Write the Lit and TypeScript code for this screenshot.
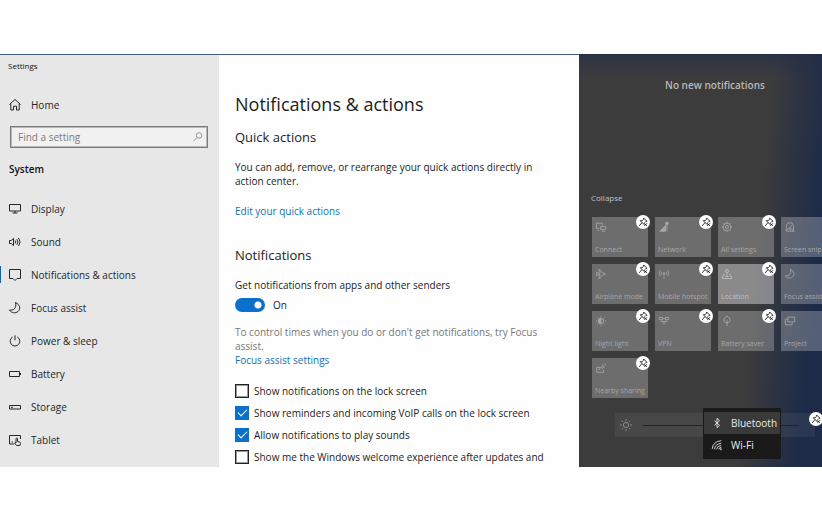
import { LitElement, html, css, svg } from "lit";
import { customElement } from "lit/decorators.js";
import { classMap } from "lit/directives/class-map.js";

const icons: Record<string, unknown> = {
  home: svg`<path d="M1.5 6.5 7 1.5l5.500 5M2.800 5.800v6.200h2.700V8.200h3V12h2.700V5.800"/>`,
  search: svg`<circle cx="8.200" cy="5.200" r="3.200"/><path d="M5.800 7.600 1.800 11.800"/>`,
  display: svg`<path d="M1.500 2.500h11v6.500h-11zM7 9v2M4.500 11h5"/>`,
  sound: svg`<path d="M1.500 5.500h1.700L5.500 3.400v7.200L3.200 8.500H1.500zM7.200 5.500q1.200 1.500 0 3M8.900 4.200q2 2.800 0 5.600M10.600 3q3 4 0 8"/>`,
  note: svg`<path d="M1.500 1.500h11v9H9L7 12.500l-2-2H1.500z"/>`,
  moon: svg`<path d="M7.500 1.500c4.500 2 5.500 6.500 2.500 9-2.500 2-6.500 1.700-8.500-1.500 3.500.8 7.500-1.500 6-7.500z"/>`,
  power: svg`<path d="M4.700 3a4.800 4.800 0 1 0 4.600 0M7 1.300v5"/>`,
  battery: svg`<path d="M1.500 4.500h10v5h-10zM12.500 6v2"/>`,
  storage: svg`<path d="M1.500 5.500h11v3.500h-11zM3 7.300h2"/>`,
  tablet: svg`<path d="M6 11H1.500V2.500h11V6M8 10V5.500q.8-1 1.500 0v3l2.500.7q.8.400.5 1.300l-.6 2H8.500L6.600 10q.5-.8 1.400 0M3.500 9h1.500"/>`,
  connect: svg`<path d="M5 8.500H1.500v-6h7V5M6.500 6.500h6v3.500h-6zM8 12h4M3 11h2"/>`,
  network: svg`<path d="M2 12 9 5v7z" fill="currentColor"/><circle cx="10.500" cy="3" r="1.700" fill="currentColor"/><path d="M10.500 5v7"/>`,
  gear: svg`<circle cx="7" cy="7" r="4.500"/><circle cx="7" cy="7" r="1.800"/><path d="M7 1v1.500M7 11.500V13M1 7h1.500M11.500 7H13M2.800 2.800l1 1M10.200 10.200l1 1M2.800 11.200l1-1M10.200 3.800l1-1"/>`,
  snip: svg`<path d="M3 8V5q0-3 4-3t4 3v6.500M1.500 9.500h3.500l4.500-5M7 8l5 4H7zM3 9.500v2.500h3"/>`,
  plane: svg`<path d="M2 4.500 3.500 6.200 6 6 4.500 1.800h1.300L9 6h2.500q1.500.900 0 2H9l-3.200 4.200H4.500L6 8l-2.500-.2L2 9.500z"/>`,
  hotspot: svg`<path d="M7 6v7M4.700 4.500q-1.200 1.800 0 3.600M9.300 4.500q1.200 1.800 0 3.600M2.700 2.800q-2.200 3.500 0 7M11.300 2.800q2.200 3.500 0 7"/><circle cx="7" cy="6" r=".8"/>`,
  location: svg`<circle cx="7" cy="3.500" r="1.800"/><path d="M7 5.300V10M4.500 7.500H3L1.500 12.300h11L11 7.500H9.500M5 10h4"/>`,
  sun: svg`<circle cx="7" cy="7" r="2.600"/><path d="M7 1v1.800M7 11.200V13M1 7h1.800M11.200 7H13M2.800 2.800l1.200 1.200M10 10l1.200 1.200M2.800 11.200 4 10M10 4l1.200-1.200"/>`,
  night: svg`<circle cx="7" cy="7" r="3"/><path d="M7 4a3 3 0 0 0 0 6z" fill="currentColor"/><path d="M7 1v1.800M7 11.200V13M1 7h1.800M11.200 7H13M2.800 2.800l1.200 1.200M10 10l1.200 1.200M2.800 11.200 4 10M10 4l1.200-1.200"/>`,
  vpn: svg`<path d="M1.500 3h4v2.500h-4zM5.500 4.300h3M8.500 3h4v2.500h-4zM3 7.500h8M5 7.500l2 3 2-3"/>`,
  saver: svg`<path d="M7 6v7M7 9Q2.500 8.500 3.800 4.500 5 2 7 1.500q2 .5 3.200 3Q11.500 8.500 7 9z"/>`,
  project: svg`<path d="M4.500 2.500h8v5.500h-8zM4 5H1.500v6.500h8V9"/>`,
  share: svg`<path d="M6 6.500H2v5.500h8V9M5 9.500q.5-4 4-4M8 3l3 2.500L8 8M11 1.500q1.500 1 1.500 2.500"/>`,
  pin: svg`<path d="M8 1.500 12.500 6 11 6.300 9.300 8M8 1.500l-.3 1.800-2 1.900H3.200l5.300 5.300V9.300M5.500 8 1.500 12.500M8.800 8.800l3.700 3.700M12.500 8.800l-3.700 3.700"/>`,
  bluetooth: svg`<path d="m4 4.300 6 5.400L7 12.500v-11l3 2.800-6 5.400"/>`,
  wifi: svg`<path d="M1.500 11.500Q2 3 12 2M4 12q.5-6 8-7M6.500 12q.5-4 5.500-4.500M9 12q.3-2 3-2.200"/><circle cx="11.500" cy="12" r=".7"/>`,
};

const icon = (name: string) =>
  html`<svg class="icon" viewBox="0 0 14 14" aria-hidden="true">${icons[name]}</svg>`;

const iconStyles = css`
  .icon {
    display: block;
    flex: none;
    width: 14px;
    height: 14px;
    fill: none;
    stroke: currentColor;
    stroke-width: 1;
  }
`;

@customElement("settings-sidebar")
class SettingsSidebar extends LitElement {
  static styles = [
    iconStyles,
    css`
      :host {
        display: block;
        background: #e7e7e7;
        color: #262626;
        padding-bottom: 11px;
      }
      .title {
        font-size: 8px;
        line-height: 22px;
        padding-left: 8px;
        margin-bottom: 12px;
        color: #111;
      }
      .link {
        display: flex;
        align-items: center;
        gap: 9px;
        height: 33px;
        padding-left: 8px;
        color: inherit;
        text-decoration: none;
      }
      .link.home { height: 32px; }
      .link.current {
        background: linear-gradient(#0f66b5, #0f66b5) left center / 1px 17px no-repeat;
      }
      .search {
        display: flex;
        align-items: center;
        box-sizing: border-box;
        height: 22px;
        margin: 5px 11px 12px 10px;
        padding: 0 3px 0 7px;
        border: 1px solid #7b7b7b;
        outline: 1px solid #b9b9b9;
        outline-offset: -2px;
        background: #f1f1f1;
        color: #888;
      }
      .search .icon { width: 12px; height: 12px; }
      .field {
        flex: 1;
        min-width: 0;
        padding: 0;
        border: 0;
        outline: 0;
        background: none;
        font: inherit;
        color: #333;
      }
      .field::placeholder { color: #7b7b7b; opacity: 1; }
      .group {
        margin: 0 0 14px;
        padding-left: 9px;
        font-size: 10px;
        line-height: 18px;
        font-weight: 600;
        color: #111;
      }
    `,
  ];

  private items = [
    ["display", "Display"],
    ["sound", "Sound"],
    ["note", "Notifications & actions"],
    ["moon", "Focus assist"],
    ["power", "Power & sleep"],
    ["battery", "Battery"],
    ["storage", "Storage"],
    ["tablet", "Tablet"],
  ];

  render() {
    return html`
      <div class="title">Settings</div>
      <a class="link home" href="#home">${icon("home")}<span>Home</span></a>
      <div class="search">
        <input class="field" type="text" placeholder="Find a setting" aria-label="Find a setting" />
        ${icon("search")}
      </div>
      <h2 class="group">System</h2>
      <nav>
        ${this.items.map(
          ([glyph, label]) => html`<a
            class=${classMap({ link: true, current: glyph === "note" })}
            href="#${glyph}"
            >${icon(glyph)}<span>${label}</span></a
          >`
        )}
      </nav>
    `;
  }
}

@customElement("settings-content")
class SettingsContent extends LitElement {
  static styles = css`
    :host {
      display: block;
      background: #fefefe;
      color: #1c1c1c;
      padding: 37px 24px 3px 16px;
      line-height: 14px;
    }
    h1, h2, p { margin: 0; font-weight: 400; }
    h1 { font-size: 18px; line-height: 24px; margin-bottom: 12px; }
    h2 { font-size: 13px; line-height: 18px; margin-bottom: 14px; }
    .link { display: block; width: max-content; color: #0f72b4; text-decoration: none; }
    .edit { margin: 16px 0 28px; }
    .hint { color: #777; margin-top: 13px; }
    .toggle { display: flex; align-items: center; gap: 8px; margin-top: 6px; }
    .switch {
      appearance: none;
      width: 30px;
      height: 14px;
      margin: 0;
      border-radius: 7px;
      background: radial-gradient(circle at 23px 7px, #fff 3px, #0b70cc 4px);
    }
    .options { display: grid; gap: 8px; margin-top: 17px; }
    .option { display: flex; align-items: center; gap: 5px; white-space: nowrap; }
    .box {
      appearance: none;
      display: grid;
      flex: none;
      box-sizing: border-box;
      width: 14px;
      height: 14px;
      margin: 0;
      border: 1px solid #222;
      outline: 1px solid #9a9a9a;
      outline-offset: -2px;
      background: #fff;
    }
    .box:checked { border-color: #0b70cc; outline: 0; background: #0b70cc; }
    .box:checked::after {
      content: "";
      place-self: center;
      width: 9px;
      height: 5px;
      margin-bottom: 3px;
      border: solid #fff;
      border-width: 0 0 1px 1px;
      box-sizing: border-box;
      rotate: -45deg;
    }
  `;

  private options: [string, boolean][] = [
    ["Show notifications on the lock screen", false],
    ["Show reminders and incoming VoIP calls on the lock screen", true],
    ["Allow notifications to play sounds", true],
    ["Show me the Windows welcome experience after updates and", false],
  ];

  render() {
    return html`
      <h1>Notifications &amp; actions</h1>
      <h2>Quick actions</h2>
      <p>You can add, remove, or rearrange your quick actions directly in action center.</p>
      <a class="link edit" href="#edit">Edit your quick actions</a>
      <h2>Notifications</h2>
      <p id="senders">Get notifications from apps and other senders</p>
      <label class="toggle">
        <input class="switch" type="checkbox" role="switch" aria-describedby="senders" checked />
        <span>On</span>
      </label>
      <p class="hint">
        To control times when you do or don't get notifications, try Focus assist.
      </p>
      <a class="link" href="#focus">Focus assist settings</a>
      <div class="options">
        ${this.options.map(
          ([label, on]) => html`<label class="option"
            ><input class="box" type="checkbox" ?checked=${on} /><span>${label}</span></label
          >`
        )}
      </div>
    `;
  }
}

@customElement("action-center")
class ActionCenter extends LitElement {
  static styles = [
    iconStyles,
    css`
      :host {
        display: block;
        overflow: hidden;
        background: linear-gradient(#202c4a88, #202c4a00 24px),
          linear-gradient(95deg, #3c3c3c 70%, #2d3342 80%, #1d2b48 92%);
        color: #c4c4c4;
      }
      .sheet { width: 272px; }
      .empty {
        margin: 0;
        padding: 21px 0 98px;
        text-align: center;
        font-weight: 600;
        line-height: 18px;
        color: #b9b9b9;
      }
      button { font: inherit; color: inherit; border: 0; padding: 0; background: none; }
      .collapse {
        display: block;
        margin: 0 0 13px 12px;
        font-size: 8px;
        line-height: 12px;
        color: #b9c3cb;
      }
      .tiles {
        display: grid;
        grid-template-columns: repeat(4, 56px);
        gap: 7px;
        margin-left: 13px;
      }
      .cell { position: relative; }
      .tile {
        display: flex;
        flex-direction: column;
        justify-content: space-between;
        box-sizing: border-box;
        width: 100%;
        height: 40px;
        padding: 4px 0 2px 3px;
        background: #ffffff40;
        color: #a6a6a6;
        font-size: 7px;
        line-height: 10px;
        text-align: left;
        white-space: nowrap;
      }
      .tile.on { background: #ffffff66; color: #bdbdbd; }
      .tile .icon { width: 12px; height: 12px; }
      .pin {
        position: absolute;
        top: -2px;
        right: -2px;
        display: grid;
        place-items: center;
        width: 14px;
        height: 14px;
        border-radius: 50%;
        background: #fff;
        color: #111;
      }
      .pin .icon { width: 10px; height: 10px; stroke-width: 1.2; }
      .brightness {
        position: relative;
        display: flex;
        align-items: center;
        gap: 10px;
        box-sizing: border-box;
        width: 200px;
        height: 24px;
        margin: 15px 0 30px 36px;
        padding: 0 16px 0 4px;
        background: #ffffff0f;
        color: #8d8d8d;
      }
      .range {
        appearance: none;
        flex: 1;
        min-width: 0;
        height: 1px;
        margin: 0;
        background: #222;
      }
      .range::-webkit-slider-thumb { appearance: none; width: 4px; height: 12px; background: #777; }
      .brightness .pin { top: -1px; right: -8px; }
      .menu {
        position: absolute;
        top: -5px;
        left: 88px;
        box-sizing: border-box;
        width: 78px;
        padding: 4px 1px 3px;
        background: #1a1a1a;
        color: #ededed;
      }
      .choice {
        display: flex;
        align-items: center;
        gap: 8px;
        width: 100%;
        height: 22px;
        padding-left: 7px;
      }
      .choice.active { background: #3a3a3a; }
      .choice .icon { width: 12px; height: 12px; }
    `,
  ];

  private tiles = [
    ["connect", "Connect"],
    ["network", "Network"],
    ["gear", "All settings"],
    ["snip", "Screen snip"],
    ["plane", "Airplane mode"],
    ["hotspot", "Mobile hotspot"],
    ["location", "Location"],
    ["moon", "Focus assist"],
    ["night", "Night light"],
    ["vpn", "VPN"],
    ["saver", "Battery saver"],
    ["project", "Project"],
    ["share", "Nearby sharing"],
  ];

  render() {
    return html`
      <div class="sheet">
        <p class="empty">No new notifications</p>
        <button class="collapse">Collapse</button>
        <div class="tiles">
          ${this.tiles.map(
            ([glyph, label]) => html`<div class="cell">
              <button class=${classMap({ tile: true, on: glyph === "location" })}>
                ${icon(glyph)}<span>${label}</span>
              </button>
              <button class="pin" aria-label="Unpin ${label}">${icon("pin")}</button>
            </div>`
          )}
        </div>
        <div class="brightness">
          ${icon("sun")}
          <input class="range" type="range" aria-label="Brightness" />
          <button class="pin" aria-label="Unpin brightness">${icon("pin")}</button>
          <div class="menu" role="menu">
            <button class="choice active" role="menuitem">${icon("bluetooth")}Bluetooth</button>
            <button class="choice" role="menuitem">${icon("wifi")}Wi-Fi</button>
          </div>
        </div>
      </div>
    `;
  }
}

@customElement("app-root")
class AppRoot extends LitElement {
  static styles = css`
    :host {
      display: block;
      padding: 54px 0;
      background: #fff;
      font: 10px/14px "Open Sans", "Noto Sans", sans-serif;
    }
    .window {
      display: grid;
      grid-template-columns: 219px minmax(0, 1fr) 243px;
    }
    .pane { border-top: 1px solid #3f5f88; }
    .dark { border-top-color: #252e45; }
  `;

  render() {
    return html`
      <div class="window">
        <settings-sidebar class="pane"></settings-sidebar>
        <settings-content class="pane"></settings-content>
        <action-center class="pane dark"></action-center>
      </div>
    `;
  }
}
